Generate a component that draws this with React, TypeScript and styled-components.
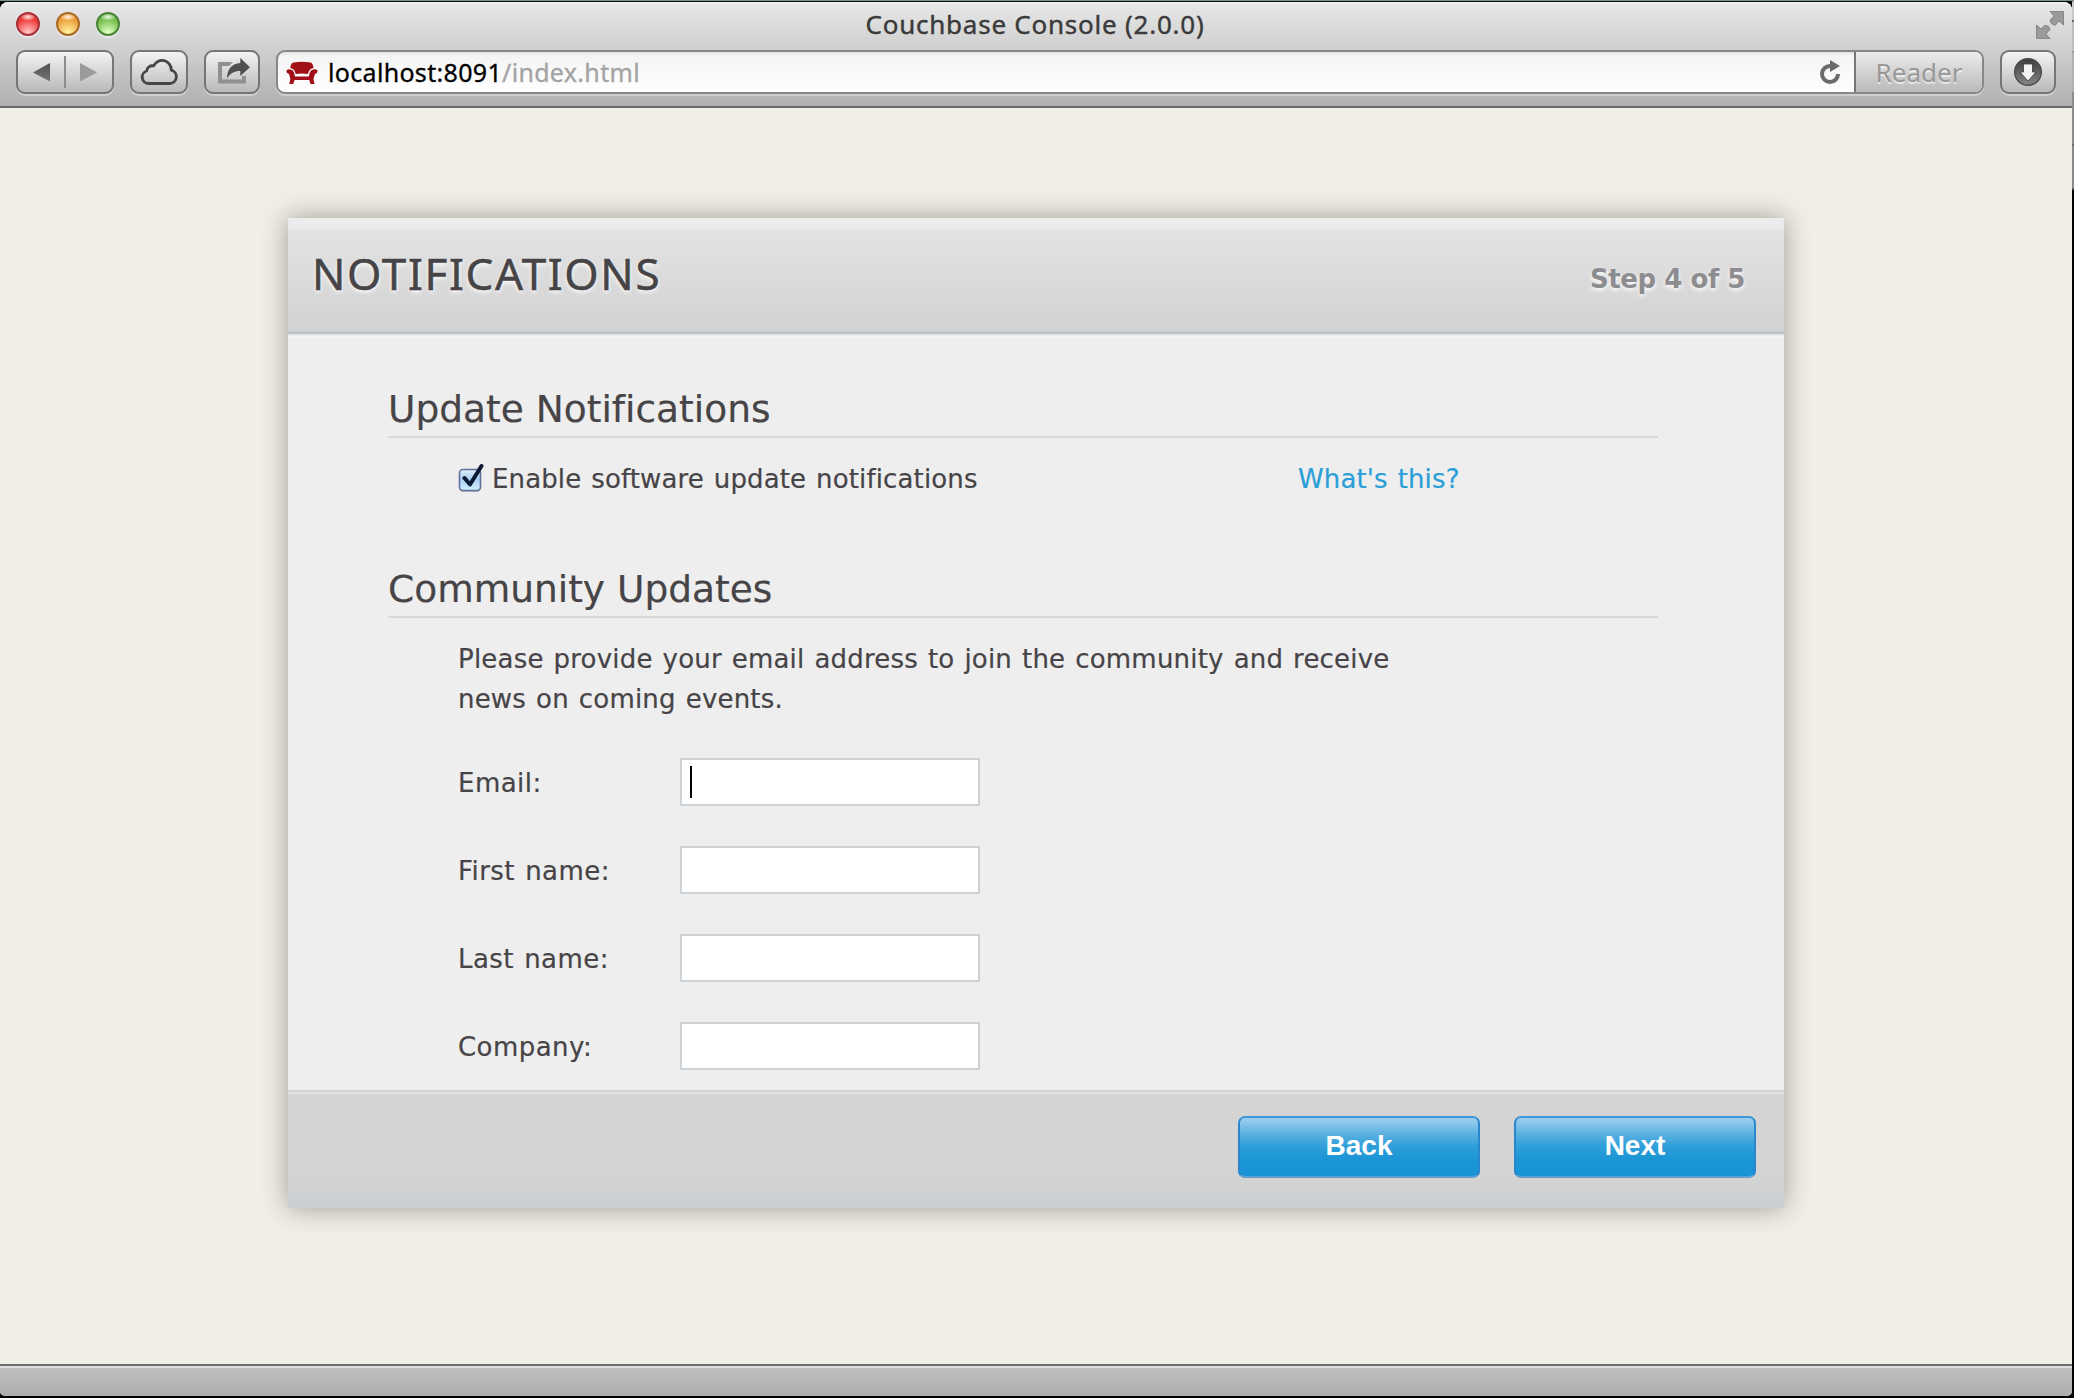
import React from 'react';
import styled, { createGlobalStyle, css } from 'styled-components';

const GlobalStyle = createGlobalStyle`
  * { box-sizing: border-box; }
  html, body { margin: 0; padding: 0; background: #000; }
  body { width: 2074px; height: 1398px; overflow: hidden; font-variant-ligatures: none; }
`;

const verdana = css`font-family: 'DejaVu Sans', 'Liberation Sans', sans-serif;`;
const lucida = css`font-family: 'Noto Sans', 'Open Sans', sans-serif;`;

const Desktop = styled.div`
  width: 2074px;
  height: 1398px;
  padding: 2px 2px 2px 0;
  background:
    linear-gradient(#7f8e91 0 1px, #0b1214 1px 2px) 0 0 / 2072px 2px no-repeat,
    linear-gradient(#7f8e91 0 2px, #c9c9c9 2px 20px, #6c6c6c 20px 22px, #bdbdbd 22px 51px, #8a8a8a 51px 52px, #b0b0b0 52px 92px, #8c8c8c 92px 144px, #6c6c6c 144px 146px, #8d8a86 146px 188px, #5c5c5c 188px 190px, #000 190px) 2072px 0 / 2px 1398px no-repeat,
    #000;
`;

const Window = styled.div`
  display: flex;
  flex-direction: column;
  width: 2072px;
  height: 1394px;
  border-radius: 8px 8px 5px 5px;
  overflow: hidden;
  background: #f0eee6;
`;

const Chrome = styled.header`
  height: 106px;
  flex: none;
  border-bottom: 2px solid #696969;
  background: linear-gradient(#f4f4f4 0, #e6e6e6 3px, #cfcfcf 48px, #b0b0b0 100%);
`;

const TitleRow = styled.div`
  display: grid;
  grid-template-columns: 1fr auto 1fr;
  height: 48px;
  padding: 0 8px 0 16px;
`;

const Lights = styled.div`
  display: flex;
  gap: 16px;
  padding-top: 10px;
`;

const Light = styled.span<{ $edge: string; $mid: string; $glow: string }>`
  width: 24px;
  height: 24px;
  border-radius: 50%;
  border: 2px solid ${p => p.$edge};
  background:
    radial-gradient(ellipse 7px 3.5px at 50% 15%, rgba(255, 255, 255, 0.85), rgba(255, 255, 255, 0.1) 100%, transparent),
    radial-gradient(circle at 50% 95%, ${p => p.$glow} 5%, ${p => p.$mid} 65%);
  box-shadow: 0 2px 1px rgba(255, 255, 255, 0.5);
`;

const WindowTitle = styled.h1`
  ${lucida}
  margin: 0;
  padding-top: 6px;
  padding-right: 10px;
  font-size: 26px;
  font-weight: 400;
  line-height: 32px;
  letter-spacing: 0.76px;
  color: #3a3a3a;
  -webkit-text-stroke: 0.4px #3a3a3a;
`;

const FullscreenSlot = styled.div`
  display: flex;
  justify-content: flex-end;
  padding-top: 9px;
`;

const Toolbar = styled.div`
  display: flex;
  gap: 16px;
  padding: 0 16px;
  height: 44px;
`;

const ToolButton = styled.button<{ $w: number }>`
  flex: none;
  display: flex;
  align-items: center;
  justify-content: center;
  width: ${p => p.$w}px;
  height: 44px;
  padding: 0;
  border: 2px solid #767676;
  border-radius: 9px;
  background: linear-gradient(#f3f3f3, #b9b9b9);
  box-shadow: 0 2px 0 rgba(255, 255, 255, 0.35);
`;

const AddressBar = styled.div`
  flex: 1;
  display: flex;
  height: 44px;
  border: 2px solid #878787;
  border-radius: 9px;
  background: linear-gradient(#e2e2e2 0, #f4f4f4 4px, #ffffff 100%);
  box-shadow: 0 2px 0 rgba(255, 255, 255, 0.35);
  overflow: hidden;
`;

const Url = styled.div`
  ${lucida}
  flex: 1;
  padding-left: 10px;
  font-size: 25px;
  line-height: 40px;
  letter-spacing: 0.32px;
  color: #000;
  white-space: nowrap;
  -webkit-text-stroke-width: 0.3px;
`;

const UrlPath = styled.span`
  color: #a3a3a3;
`;

const FaviconSlot = styled.div`
  display: flex;
  align-items: center;
  padding-left: 8px;
  padding-top: 2px;
`;

const ReloadSlot = styled.div`
  display: flex;
  align-items: flex-start;
  padding: 6px 12px 0 0;
`;

const Reader = styled.div`
  ${lucida}
  width: 128px;
  border-left: 2px solid #767676;
  background: linear-gradient(#ececec, #b9b9b9);
  font-size: 26px;
  line-height: 40px;
  letter-spacing: 0;
  text-align: center;
  color: #989898;
  text-shadow: 0 2px 0 rgba(255, 255, 255, 0.6);
`;

const Page = styled.main`
  flex: 1;
  padding: 110px 0 0 288px;
  background: #f0eee6;
`;

const StatusBar = styled.footer`
  flex: none;
  height: 32px;
  border-top: 2px solid #6c6c6c;
  background: linear-gradient(#dcdcdc 0 2px, #bfbfbf 2px, #adadad 100%);
`;

const Card = styled.section`
  ${verdana}
  display: flex;
  flex-direction: column;
  width: 1496px;
  height: 990px;
  background: #eeeeee;
  color: #464447;
  box-shadow: 0 0 24px rgba(40, 42, 36, 0.42);
`;

const CardHeader = styled.div`
  display: flex;
  justify-content: space-between;
  flex: none;
  height: 120px;
  padding: 0 39px 0 24px;
  background: linear-gradient(
    #eeeeee 0, #e9e9e9 12px, #e3e3e3 12px, #d2d2d2 113px,
    #bcc2c6 114px 116px, #dde1e3 116px 117px, #f0f1f2 118px, #f6f6f6 120px
  );
`;

const CardTitle = styled.h2`
  ${lucida}
  margin: 0;
  padding-top: 25px;
  font-size: 44px;
  font-weight: 400;
  line-height: 60px;
  letter-spacing: 1.65px;
  -webkit-text-stroke: 0.5px #464447;
  text-shadow: 0 2px 4px #fff;
`;

const Step = styled.div`
  padding-top: 41px;
  font-size: 26px;
  font-weight: 700;
  line-height: 40px;
  letter-spacing: -0.45px;
  color: #8d8d90;
  text-shadow: 0 2px 4px #fff;
`;

const CardBody = styled.div`
  flex: 1;
  padding: 47px 126px 0 100px;
  -webkit-text-stroke-width: 0.2px;
`;

const SectionTitle = styled.h3<{ $gap?: number }>`
  margin: ${p => p.$gap || 0}px 0 21px;
  padding-bottom: 3px;
  border-bottom: 2px solid #d3d9dd;
  font-size: 37.5px;
  font-weight: 400;
  line-height: 48px;
`;

const Indented = styled.div`
  padding-left: 70px;
  font-size: 26px;
  line-height: 40px;
  letter-spacing: 0.13px;
  word-spacing: 1.5px;
`;

const OptionRow = styled.div`
  display: grid;
  grid-template-columns: 840px auto;
`;

const CheckLabel = styled.label`
  display: flex;
  gap: 8px;
`;

const Link = styled.a`
  color: #2a9fd8;
`;

const Paragraph = styled.p`
  width: 980px;
  margin: 0 0 39px;
  letter-spacing: 0.2px;
`;

const Fields = styled.div`
  display: grid;
  row-gap: 40px;
`;

const Field = styled.label`
  display: grid;
  grid-template-columns: 222px 300px;
  height: 48px;
`;

const FieldName = styled.span`
  padding-top: 5px;
  letter-spacing: 0.45px;
`;

const InputBox = styled.span`
  position: relative;
  display: block;
  height: 48px;
`;

const Input = styled.input`
  ${verdana}
  display: block;
  width: 300px;
  height: 48px;
  padding: 0 8px;
  border: 2px solid #ccd2d6;
  border-radius: 0;
  background: #fff;
  font-size: 26px;
  outline: none;
`;

const Caret = styled.i`
  position: absolute;
  left: 10px;
  top: 8px;
  width: 2px;
  height: 32px;
  background: #000;
`;

const CardFooter = styled.div`
  flex: none;
  display: flex;
  justify-content: flex-end;
  gap: 34px;
  height: 118px;
  padding: 26px 28px 0 0;
  background: linear-gradient(#d1d1d1 0, #d5d5d5 2px, #dedede 2px, #dedede 4px, #d4d4d4 5px, #d4d4d4 84px, #cbced1 100%);
`;

const ActionButton = styled.button`
  width: 242px;
  height: 62px;
  padding: 0 0 2px;
  border: 2px solid;
  border-color: #3e97d6 #2b87cc #5f9fd2 #2b87cc;
  border-radius: 7px;
  background: linear-gradient(#9acdee 0, #8fc8ec 4px, #5bb1e0 16px, #2f9fd9 28px, #1a95d5 42px, #1894d6 100%);
  font-family: 'Liberation Sans', Arial, sans-serif;
  font-size: 28px;
  font-weight: 700;
  line-height: 40px;
  color: #fff;
`;

const NavIcon = () => (
  <svg width="94" height="40" viewBox="18 52 94 40">
    <defs>
      <linearGradient id="navBack" x1="0" y1="0" x2="0" y2="1">
        <stop offset="0" stopColor="#4c4c4c" /><stop offset="1" stopColor="#777" />
      </linearGradient>
    </defs>
    <path d="M33 72.5 50 63v18.5z" fill="url(#navBack)" />
    <path d="M64 56h2v32h-2z" fill="#8d8d8d" />
    <path d="M97 72.5 80 63v18.5z" fill="#9a9a9a" />
  </svg>
);

const CloudIcon = () => (
  <svg width="54" height="40" viewBox="132 52 54 40">
    <path
      d="M148.5 83.5H169.8a6.8 6.8 0 0 0 1.4-13.4A9.2 9.2 0 0 0 153.6 65.9A5.6 5.6 0 0 0 146.7 71A6.4 6.4 0 0 0 148.5 83.5Z"
      fill="none" stroke="#454545" strokeWidth="2.8" strokeLinejoin="round"
    />
  </svg>
);

const ShareIcon = () => (
  <svg width="52" height="40" viewBox="206 52 52 40">
    <path d="M233 62h-15v21.500h28v-7.500h-4v3.500h-20v-13.500h7z" fill="#909090" />
    <path d="M240.300 58 250 67.200 240.300 76v-5c-6 0-10 2-13.300 7.500 0-9 5-15 13.300-15.500z" fill="#505050" />
  </svg>
);

const CouchIcon = () => (
  <svg width="32" height="24" viewBox="286 61 32 24" fill="#a30f16">
    <path d="M293.500 62.500q8.500-1.600 17 0 2.500.6 3 5.500-3.500.4-4.600 3l-1 3q-6.200-1.200-12.200 0l-1-3q-1.200-2.600-4.400-3 .4-4.900 3.200-5.500z" />
    <path d="M286.500 70.500q1.500-1.800 4-1 3 .7 3.500 3l1 4h13.800l1-4q.7-2.300 3.500-3 2.700-.8 4.200 1 .3 2.500-2.600 3.600L313.500 79l1 5h-4l-1.300-4h-14.600l-1.400 4h-3.900l1-5-1.200-4.900q-2.900-1-2.600-3.600z" />
  </svg>
);

const ReloadIcon = () => (
  <svg width="24" height="28" viewBox="1818 58 24 28">
    <path d="M1830.500 66A8 8 0 1 0 1838 74" fill="none" stroke="#6b6b6b" strokeWidth="4" />
    <path d="M1830 60 1840 66 1830 72z" fill="#6b6b6b" />
  </svg>
);

const DownloadIcon = () => (
  <svg width="52" height="40" viewBox="2002 52 52 40">
    <defs>
      <linearGradient id="disc" x1="0" y1="0" x2="0" y2="1">
        <stop offset="0" stopColor="#3c3c3c" /><stop offset="1" stopColor="#868686" />
      </linearGradient>
    </defs>
    <circle cx="2028" cy="72" r="13.300" fill="url(#disc)" stroke="#4c4c4c" strokeWidth="1.400" />
    <path d="M2023.500 64h9v8h3.500l-8 9-8-9h3.500z" fill="#f4f4f4" stroke="#3a3a3a" strokeWidth="0.800" />
  </svg>
);

const FullscreenIcon = () => (
  <svg width="28" height="28" viewBox="0 0 28 28" fill="#9a9a9a" stroke="#7b7b7b" strokeWidth="0.800">
    <path d="M14 .5H27.500V14L23 10 19 14.500Q14.500 13.500 14 9L18 5z" />
    <path d="M14 27.500H.5V14L5 18 8.500 14.500Q13.500 14 14 18.500L10 23z" />
  </svg>
);

const CheckboxIcon = () => (
  <svg width="26" height="40" viewBox="458 459 26 40">
    <defs>
      <linearGradient id="check" x1="0" y1="0" x2="0" y2="1">
        <stop offset="0" stopColor="#e3effb" /><stop offset="0.450" stopColor="#a9cdf3" /><stop offset="1" stopColor="#d2f0ff" />
      </linearGradient>
    </defs>
    <rect x="459.500" y="470" width="21" height="22" rx="4" fill="#b9b9bb" />
    <rect x="459.500" y="469.500" width="21" height="21" rx="3.500" fill="url(#check)" stroke="#61709a" strokeWidth="1.600" />
    <path d="M464.500 478 470 484.500 481.500 466" fill="none" stroke="#0a1a33" strokeWidth="4" strokeLinecap="round" strokeLinejoin="round" />
  </svg>
);

const fields = ['Email:', 'First name:', 'Last name:', 'Company:'];

export default function App() {
  return (
    <Desktop>
      <GlobalStyle />
      <Window>
        <Chrome>
          <TitleRow>
            <Lights>
              <Light $edge="#a63338" $mid="#ee3f40" $glow="#ffc4c0" />
              <Light $edge="#a96a26" $mid="#eda13c" $glow="#fff3a0" />
              <Light $edge="#4a8336" $mid="#77bf50" $glow="#e0ffc0" />
            </Lights>
            <WindowTitle>Couchbase Console (2.0.0)</WindowTitle>
            <FullscreenSlot><FullscreenIcon /></FullscreenSlot>
          </TitleRow>
          <Toolbar>
            <ToolButton $w={98}><NavIcon /></ToolButton>
            <ToolButton $w={58}><CloudIcon /></ToolButton>
            <ToolButton $w={56}><ShareIcon /></ToolButton>
            <AddressBar>
              <FaviconSlot><CouchIcon /></FaviconSlot>
              <Url>localhost:8091<UrlPath>/index.html</UrlPath></Url>
              <ReloadSlot><ReloadIcon /></ReloadSlot>
              <Reader>Reader</Reader>
            </AddressBar>
            <ToolButton $w={56}><DownloadIcon /></ToolButton>
          </Toolbar>
        </Chrome>
        <Page>
          <Card>
            <CardHeader>
              <CardTitle>NOTIFICATIONS</CardTitle>
              <Step>Step 4 of 5</Step>
            </CardHeader>
            <CardBody>
              <SectionTitle>Update Notifications</SectionTitle>
              <Indented>
                <OptionRow>
                  <CheckLabel><CheckboxIcon />Enable software update notifications</CheckLabel>
                  <Link>What's this?</Link>
                </OptionRow>
              </Indented>
              <SectionTitle $gap={66}>Community Updates</SectionTitle>
              <Indented>
                <Paragraph>
                  Please provide your email address to join the community and receive
                  <br />
                  news on coming events.
                </Paragraph>
                <Fields>
                  {fields.map((name, i) => (
                    <Field key={name}>
                      <FieldName>{name}</FieldName>
                      <InputBox>
                        <Input type="text" />
                        {i === 0 && <Caret />}
                      </InputBox>
                    </Field>
                  ))}
                </Fields>
              </Indented>
            </CardBody>
            <CardFooter>
              <ActionButton>Back</ActionButton>
              <ActionButton>Next</ActionButton>
            </CardFooter>
          </Card>
        </Page>
        <StatusBar />
      </Window>
    </Desktop>
  );
}
